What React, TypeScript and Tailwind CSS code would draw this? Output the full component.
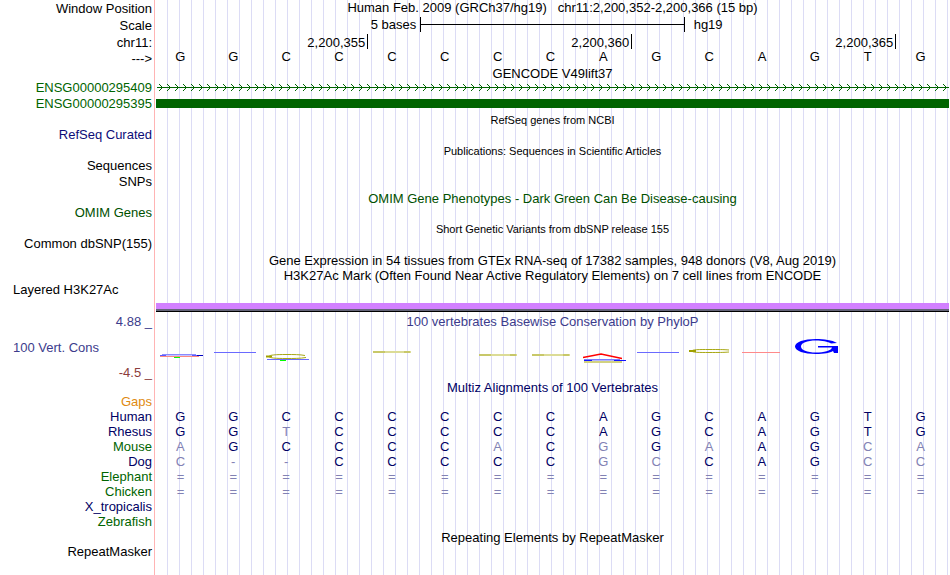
import type { ReactNode } from "react";

const WINDOW_BASES = "GGCCCCCCAGCAGTG".split("");

// Upper case bases match the human reference, lower case ones differ from it.
const SPECIES = [
  { name: "Gaps", color: "text-[#e08a10]", bases: "" },
  { name: "Human", color: "text-[#000064]", bases: "GGCCCCCCAGCAGTG" },
  { name: "Rhesus", color: "text-[#000064]", bases: "GGtCCCCCAGCAGTG" },
  { name: "Mouse", color: "text-[#006400]", bases: "aGCCCCaCgGaAGca" },
  { name: "Dog", color: "text-[#000064]", bases: "c--CCCCCgcCAGcc" },
  { name: "Elephant", color: "text-[#006400]", bases: "===============" },
  { name: "Chicken", color: "text-[#006400]", bases: "===============" },
  { name: "X_tropicalis", color: "text-[#000064]", bases: "" },
  { name: "Zebrafish", color: "text-[#006400]", bases: "" },
];

type TrackProps = {
  label?: string;
  className: string;
  labelClassName?: string;
  children?: ReactNode;
};

function Track({ label, className, labelClassName = "pr-1 text-right", children }: TrackProps) {
  return (
    <div className={`grid grid-cols-[156px_1fr] ${className}`}>
      <div className={`whitespace-nowrap ${labelClassName}`}>{label}</div>
      <div className="min-w-0">{children}</div>
    </div>
  );
}

function Title({ children, className = "" }: { children: ReactNode; className?: string }) {
  return <h2 className={`text-center whitespace-pre ${className}`}>{children}</h2>;
}

function Header() {
  return (
    <header>
      <Track label="Window Position" className="h-[17px]" labelClassName="pr-1 text-right leading-[17px]">
        <h1 className="text-center whitespace-pre">
          {"Human Feb. 2009 (GRCh37/hg19)   chr11:2,200,352-2,200,366 (15 bp)"}
        </h1>
      </Track>
      <Track label="Scale" className="h-[17px]" labelClassName="pr-1 text-right leading-[17px]">
        <div className="grid grid-cols-3">
          <span className="pr-1 text-right">5 bases</span>
          <span className="flex h-[15px] items-center border-x border-black">
            <span className="h-px w-full bg-black" />
          </span>
          <span className="pl-[9px]">hg19</span>
        </div>
      </Track>
      <Track label="chr11:" className="h-4" labelClassName="pr-1 text-right leading-[17px]">
        <div className="grid grid-cols-[4fr_5fr_5fr_1fr] pl-px text-right leading-[17px]">
          <span className="h-[15px] border-r border-black pr-0.5">2,200,355</span>
          <span className="h-[15px] border-r border-black pr-0.5">2,200,360</span>
          <span className="h-[15px] border-r border-black pr-0.5">2,200,365</span>
        </div>
      </Track>
      <Track label="--->" className="h-4" labelClassName="pr-1 text-right leading-[17px]">
        <div className="-ml-0.5 mr-0.5 grid grid-cols-15 text-center leading-[13px]">
          {WINDOW_BASES.map((base, i) => (
            <span key={i}>{base}</span>
          ))}
        </div>
      </Track>
    </header>
  );
}

function IntronLine() {
  return (
    <svg className="h-[15px] w-full text-[#006400]" aria-hidden="true">
      <defs>
        <pattern id="strand" width="8" height="15" patternUnits="userSpaceOnUse">
          <path
            d="M3 4h1v1h-1zM4 5h1v1h-1zM5 6h1v1h-1zM6 7h1v1h-1zM5 8h1v1h-1zM4 9h1v1h-1zM3 10h1v1h-1z"
            fill="currentColor"
          />
        </pattern>
      </defs>
      <rect x="1" width="100%" height="15" fill="url(#strand)" />
      <rect x="1" y="7" width="100%" height="1" fill="currentColor" />
    </svg>
  );
}

function ConservationLogo() {
  return (
    <svg className="h-12 w-full" viewBox="156 332 793 48" preserveAspectRatio="none" fill="none" aria-hidden="true">
      <path d="M162 354.5h34" stroke="#8a8aff" />
      <path d="M160 355.5h6M192 355.5h6" stroke="#5a5aff" />
      <path d="M166 355.5h26" stroke="#c4c4ff" />
      <path d="M197 355.5h6" stroke="#0000c0" />
      <path d="M160 356.5h39" stroke="#ff8a80" />
      <path d="M174 357.5h6" stroke="#00ff00" />

      <path d="M214 352.5h42" stroke="#6a6aff" />

      <path d="M305 355.500C300 354.500 294 354.500 286 354.500C276 354.500 269 355 269 356.500C269 358 276 358.500 286 358.500C294 358.500 300 358.500 306 357.500" stroke="#a8a814" />
      <path d="M266 356.5h6" stroke="#a0a000" strokeWidth="2" />
      <path d="M267 359.5h42" stroke="#6a6aff" />
      <path d="M280 360.5h6" stroke="#00ff00" />

      <path d="M373 352h38M479 355h38M532 355h38" stroke="#dcdc96" strokeWidth="2" />
      <path d="M373 352h12M404 352h6M479 355h12M510 355h6M532 355h12M563 355h6" stroke="#b4b43c" />

      <path d="M584 359.5h36" stroke="#7a7aff" />
      <path d="M584 360.5h8M614 360.5h12" stroke="#1414ff" />
      <path d="M592 360.5h22M590 361.5h30" stroke="#b4b4ff" />
      <path d="M584 362h38" stroke="#d2d280" strokeWidth="2" />
      <path d="M583 357.500L601 354L622 358.500" stroke="#ff0000" strokeWidth="1.3" />

      <path d="M637 352.5h42" stroke="#6a6aff" />

      <path d="M729 350C724 349.500 718 349.500 709 349.500C699 349.500 692 349.500 692 351C692 352.500 699 352.500 709 352.500C718 352.500 724 352.500 729 352" stroke="#a8a814" />
      <path d="M689 351h7" stroke="#a0a000" strokeWidth="2" />

      <path d="M742 352.5h38" stroke="#ff8a8a" />

      <path
        d="M837 343C832 340 824 339 816 339C804 339 795 342 795 346.500C795 351 804 354 816 354C824 354 830 353 833 351L834 353H838V346H818V347.500H832C831 351 824 352.500 816 352.500C807 352.500 801 350 801 346.500C801 343 807 340.500 816 340.500C822 340.500 828 341.500 831 343.500Z"
        fill="#0000ff"
      />
    </svg>
  );
}

function Alignment() {
  return (
    <div className="pr-0.5">
      <table className="w-full table-fixed border-collapse text-center">
        <tbody>
          {SPECIES.map(({ name, color, bases }) => (
            <tr key={name} className="h-[15px]">
              <th scope="row" className={`w-[154px] p-0 pr-0.5 text-right font-normal ${color}`}>
                {name}
              </th>
              {WINDOW_BASES.map((_, i) => {
                const base = bases[i] ?? "";
                const matches = base >= "A" && base <= "Z";
                return (
                  <td key={i} className={`p-0 ${matches ? "text-[#000064]" : "text-[#8282b4]"}`}>
                    {base.toUpperCase()}
                  </td>
                );
              })}
            </tr>
          ))}
        </tbody>
      </table>
    </div>
  );
}

export default function App() {
  return (
    <main className="min-h-screen overflow-hidden bg-white bg-[linear-gradient(#ffb4b4,#ffb4b4),repeating-linear-gradient(to_right,transparent_0_11px,#dcdcf5_11px_12px)] bg-[size:1px_100%,100%_100%] bg-[position:154px_0,156px_0] bg-no-repeat pr-px font-['Liberation_Sans',Arial,sans-serif] text-[13px] leading-[15px] text-black">
      <Header />

      <Track className="h-[14px]">
        <Title>GENCODE V49lift37</Title>
      </Track>
      <Track label="ENSG00000295409" className="h-4" labelClassName="pr-1 text-right text-[#006400]">
        <IntronLine />
      </Track>
      <Track label="ENSG00000295395" className="h-4" labelClassName="pr-1 text-right text-[#006400]">
        <div className="mt-[3px] h-[9px] bg-[#006400]" />
      </Track>

      <Track className="h-[15px]">
        <Title className="text-[11px] leading-[17px]">RefSeq genes from NCBI</Title>
      </Track>
      <Track label="RefSeq Curated" className="h-4" labelClassName="pr-1 text-right text-[#0c0c78]" />

      <Track className="h-[15px]">
        <Title className="text-[11px] leading-[17px]">Publications: Sequences in Scientific Articles</Title>
      </Track>
      <Track label="Sequences" className="h-4" />
      <Track label="SNPs" className="h-[17px]" />

      <Track className="h-[14px]">
        <Title className="text-[#005000]">OMIM Gene Phenotypes - Dark Green Can Be Disease-causing</Title>
      </Track>
      <Track label="OMIM Genes" className="h-4" labelClassName="pr-1 text-right text-[#005000]" />

      <Track className="h-[15px]">
        <Title className="text-[11px] leading-[17px]">Short Genetic Variants from dbSNP release 155</Title>
      </Track>
      <Track label="Common dbSNP(155)" className="h-[17px]" />

      <Track className="h-[15px]">
        <Title>Gene Expression in 54 tissues from GTEx RNA-seq of 17382 samples, 948 donors (V8, Aug 2019)</Title>
      </Track>
      <Track className="h-[14px]">
        <Title>H3K27Ac Mark (Often Found Near Active Regulatory Elements) on 7 cell lines from ENCODE</Title>
      </Track>
      <Track label="Layered H3K27Ac" className="h-[21px]" labelClassName="pl-[13px]" />
      <Track className="h-[11px]">
        <div className="h-[9px] border-b border-black bg-[#646478]">
          <div className="h-1.5 bg-[#d280ff]" />
        </div>
      </Track>

      <section className="grid grid-cols-[156px_1fr] text-[#3c3c8c]">
        <div className="flex h-[66px] flex-col justify-between pr-1 text-right">
          <span>4.88 _</span>
          <span className="pl-[13px] text-left">100 Vert. Cons</span>
          <span className="text-[#8c3c3c]">-4.5 _</span>
        </div>
        <div>
          <Title className="h-[18px]">100 vertebrates Basewise Conservation by PhyloP</Title>
          <ConservationLogo />
        </div>
      </section>

      <Track className="h-[14px]">
        <Title className="text-[#000064]">Multiz Alignments of 100 Vertebrates</Title>
      </Track>
      <Alignment />

      <Track className="h-[15px]">
        <Title className="leading-[17px]">Repeating Elements by RepeatMasker</Title>
      </Track>
      <Track label="RepeatMasker" className="h-4" />
    </main>
  );
}
